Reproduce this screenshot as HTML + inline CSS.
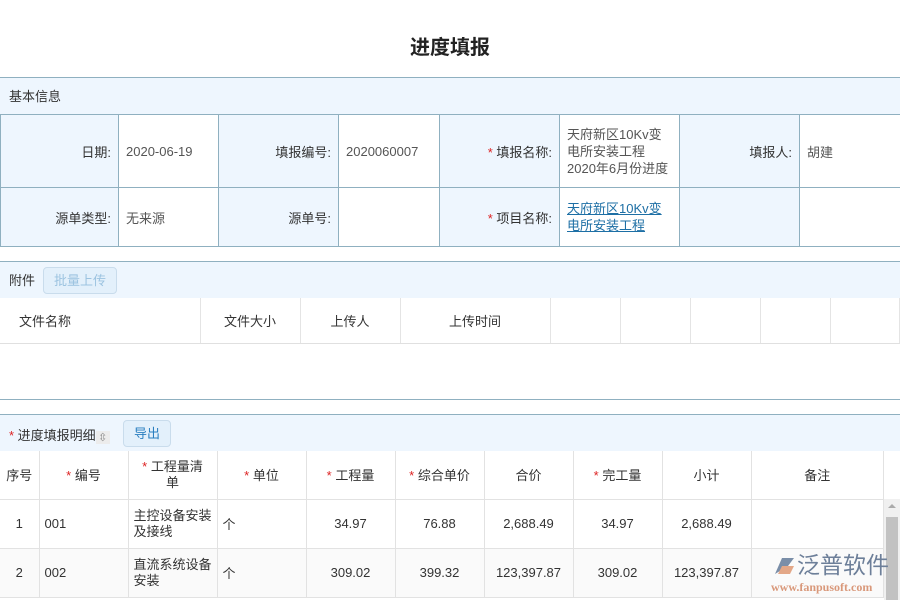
<!DOCTYPE html>
<html><head><meta charset="utf-8"><style>
*{margin:0;padding:0;box-sizing:border-box}
body{width:900px;height:600px;overflow:hidden;background:#fff;font-family:"Liberation Sans","Noto Sans CJK SC",sans-serif;font-size:13px;color:#333;position:relative}
.abs{position:absolute}
.title{left:0;width:900px;top:31px;text-align:center;font-size:20px;font-weight:bold;color:#222}
.band{left:0;width:900px;background:#eef6fe;border-top:1px solid #8fb0c0}
table{border-collapse:collapse;position:absolute;left:0}
.info td{border:1px solid #8fb0c0;padding:0 7px;font-size:13px}
.info td.l{background:#eef6fe;text-align:right;color:#333}
.info td.v{background:#fff;color:#555}
.r{color:#d22}
.btn{border:1px solid #c9dcec;border-radius:4px;background:#e3f0fb;text-align:center;font-size:13px}
.ft td{border-right:1px solid #e4e4e4;border-bottom:1px solid #e0e0e0;height:45px;font-size:13px}
.dt td{border-right:1px solid #e2e2e2;border-bottom:1px solid #e2e2e2;text-align:center;font-size:13px;color:#333}
</style></head><body>
<div class="abs title">进度填报</div>
<div class="abs band" style="top:77px;height:37px"><span class="abs" style="left:9px;top:8px">基本信息</span></div>
<table class="info" style="top:114px;width:901px">
<tr style="height:73px"><td class="l" style="width:118px">日期:</td><td class="v" style="width:100px">2020-06-19</td><td class="l" style="width:120px">填报编号:</td><td class="v" style="width:101px">2020060007</td><td class="l" style="width:120px"><span class="r">*</span> 填报名称:</td><td class="v" style="width:120px;line-height:17px">天府新区10Kv变电所安装工程2020年6月份进度</td><td class="l" style="width:120px">填报人:</td><td class="v">胡建</td></tr>
<tr style="height:59px"><td class="l">源单类型:</td><td class="v">无来源</td><td class="l">源单号:</td><td class="v"></td><td class="l"><span class="r">*</span> 项目名称:</td><td class="v" style="line-height:17px"><span style="color:#1d6fa5;text-decoration:underline">天府新区10Kv变电所安装工程</span></td><td class="l"></td><td class="v"></td></tr>
</table>
<div class="abs band" style="top:261px;height:37px"><span class="abs" style="left:9px;top:8px">附件</span><div class="abs btn" style="left:43px;top:5px;width:74px;height:27px;line-height:25px;color:#9cc3e0">批量上传</div></div>
<table class="ft" style="top:298px;width:900px"><tr>
<td style="width:200px;padding-left:19px">文件名称</td><td style="width:100px;text-align:center">文件大小</td><td style="width:100px;text-align:center">上传人</td><td style="width:150px;text-align:center">上传时间</td><td style="width:70px"></td><td style="width:70px"></td><td style="width:70px"></td><td style="width:70px"></td><td></td></tr></table>
<div class="abs" style="left:0;top:399px;width:900px;height:1px;background:#8fb0c0"></div>
<div class="abs band" style="top:414px;height:37px"><span class="abs" style="left:9px;top:10px"><span class="r">*</span> 进度填报明细<span style="display:inline-block;color:#888;background:#ececec;font-size:11px;width:14px;text-align:center;vertical-align:-1px">⇳</span></span><div class="abs btn" style="left:123px;top:5px;width:48px;height:27px;line-height:25px;color:#2a7fc0">导出</div></div>
<table class="dt" style="top:451px;width:884px">
<tr style="height:48px"><td style="width:39px">序号</td><td style="width:89px"><span class="r">*</span> 编号</td><td style="width:89px;line-height:16px"><span class="r">*</span> 工程量清<br>单</td><td style="width:89px"><span class="r">*</span> 单位</td><td style="width:89px"><span class="r">*</span> 工程量</td><td style="width:89px"><span class="r">*</span> 综合单价</td><td style="width:89px">合价</td><td style="width:89px"><span class="r">*</span> 完工量</td><td style="width:89px">小计</td><td>备注</td></tr>
<tr style="height:49px"><td>1</td><td style="text-align:left;padding-left:5px">001</td><td style="text-align:left;padding-left:5px;line-height:16px">主控设备安装及接线</td><td style="text-align:left;padding-left:5px">个</td><td>34.97</td><td>76.88</td><td>2,688.49</td><td>34.97</td><td>2,688.49</td><td></td></tr>
<tr style="height:49px;background:#fafafa"><td>2</td><td style="text-align:left;padding-left:5px">002</td><td style="text-align:left;padding-left:5px;line-height:16px">直流系统设备安装</td><td style="text-align:left;padding-left:5px">个</td><td>309.02</td><td>399.32</td><td>123,397.87</td><td>309.02</td><td>123,397.87</td><td></td></tr>
</table>
<div class="abs" style="left:884px;top:499px;width:16px;height:101px;background:#f0f0f0"></div>
<div class="abs" style="left:886px;top:517px;width:12px;height:83px;background:#c2c2c2"></div>
<div class="abs" style="left:888px;top:504px;width:0;height:0;border-left:4px solid transparent;border-right:4px solid transparent;border-bottom:4px solid #aaa"></div>
<svg class="abs" style="left:772px;top:554px" width="24" height="24" viewBox="0 0 24 24"><path d="M3 20 L10 4 L22 4 L16 12 Z" fill="#7a8ea8"/><path d="M10 12 L22 12 L18 20 L6 20 Z" fill="#e3a787"/></svg>
<div class="abs" style="left:797px;top:552px;font-size:23px;color:#6d7f99;letter-spacing:0px;line-height:26px">泛普软件</div>
<div class="abs" style="left:771px;top:580px;font-size:12px;font-weight:bold;color:#d9987a;font-family:'Liberation Serif',serif">www.fanpusoft.com</div>
</body></html>
